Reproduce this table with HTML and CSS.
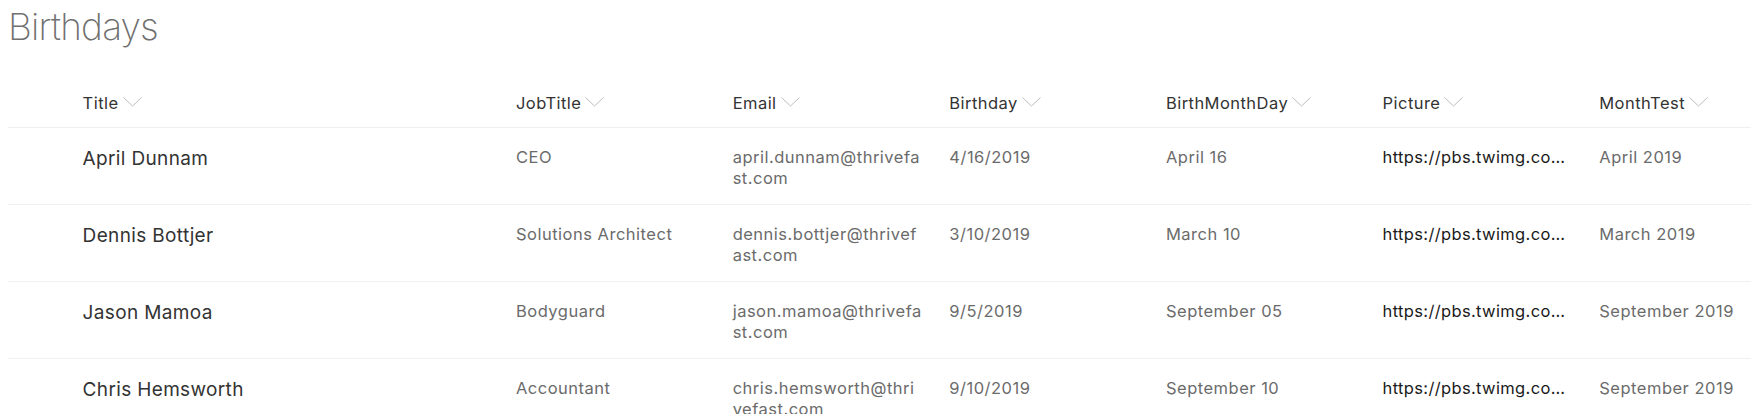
FILE: index.html
```html
<!DOCTYPE html>
<html lang="en">
<head>
<meta charset="utf-8">
<title>Birthdays</title>
<link rel="stylesheet" href="styles.css">
</head>
<body>
<main class="page">
  <h1 class="page-title">Birthdays</h1>
  <div class="list" role="table">
    <div class="row head" role="row">
      <div class="lead"></div>
      <div class="th">Title <svg class="chev" viewBox="0 0 19 10"><polyline points="0.5,0.5 9.5,9 18.5,0.5"/></svg></div>
      <div class="th">JobTitle <svg class="chev" viewBox="0 0 19 10"><polyline points="0.5,0.5 9.5,9 18.5,0.5"/></svg></div>
      <div class="th">Email <svg class="chev" viewBox="0 0 19 10"><polyline points="0.5,0.5 9.5,9 18.5,0.5"/></svg></div>
      <div class="th">Birthday <svg class="chev" viewBox="0 0 19 10"><polyline points="0.5,0.5 9.5,9 18.5,0.5"/></svg></div>
      <div class="th">BirthMonthDay <svg class="chev" viewBox="0 0 19 10"><polyline points="0.5,0.5 9.5,9 18.5,0.5"/></svg></div>
      <div class="th">Picture <svg class="chev" viewBox="0 0 19 10"><polyline points="0.5,0.5 9.5,9 18.5,0.5"/></svg></div>
      <div class="th">MonthTest <svg class="chev" viewBox="0 0 19 10"><polyline points="0.5,0.5 9.5,9 18.5,0.5"/></svg></div>
    </div>

    <div class="row" role="row">
      <div class="lead"></div>
      <div class="td name">April Dunnam</div>
      <div class="td">CEO</div>
      <div class="td email">april.dunnam@thrivefast.com</div>
      <div class="td">4/16/2019</div>
      <div class="td">April 16</div>
      <div class="td url"><span class="clip">https://pbs.twimg.co…</span></div>
      <div class="td">April 2019</div>
    </div>

    <div class="row" role="row">
      <div class="lead"></div>
      <div class="td name">Dennis Bottjer</div>
      <div class="td">Solutions Architect</div>
      <div class="td email">dennis.bottjer@thrivefast.com</div>
      <div class="td">3/10/2019</div>
      <div class="td">March 10</div>
      <div class="td url"><span class="clip">https://pbs.twimg.co…</span></div>
      <div class="td">March 2019</div>
    </div>

    <div class="row" role="row">
      <div class="lead"></div>
      <div class="td name">Jason Mamoa</div>
      <div class="td">Bodyguard</div>
      <div class="td email">jason.mamoa@thrivefast.com</div>
      <div class="td">9/5/2019</div>
      <div class="td">September 05</div>
      <div class="td url"><span class="clip">https://pbs.twimg.co…</span></div>
      <div class="td">September 2019</div>
    </div>

    <div class="row" role="row">
      <div class="lead"></div>
      <div class="td name">Chris Hemsworth</div>
      <div class="td">Accountant</div>
      <div class="td email">chris.hemsworth@thrivefast.com</div>
      <div class="td">9/10/2019</div>
      <div class="td">September 10</div>
      <div class="td url"><span class="clip">https://pbs.twimg.co…</span></div>
      <div class="td">September 2019</div>
    </div>
  </div>
</main>
</body>
</html>
```

FILE: styles.css
```css
html, body {
  margin: 0;
  padding: 0;
  background: #ffffff;
}

body {
  font-family: Inter, "Noto Sans", "Liberation Sans", sans-serif;
  color: #333333;
  overflow: hidden;
}

.page {
  padding-left: 8px;
}

.page-title {
  margin: 5px 0 0 0;
  font-size: 37px;
  line-height: 44px;
  font-weight: 200;
  color: #707070;
  letter-spacing: -0.8px;
}

.list {
  margin-top: 31px;
  width: 1800px;
}

.row {
  display: grid;
  grid-template-columns: 74.6px 433.4px repeat(5, 216.67px) 240px;
  border-bottom: 1px solid #f0f0f0;
  height: 77px;
  box-sizing: border-box;
}

.row.head {
  height: 48px;
  padding-top: 12.5px;
}

.th {
  display: flex;
  align-items: center;
  gap: 4px;
  height: 20px;
  font-size: 16.5px;
  line-height: 20px;
  letter-spacing: 0.45px;
  color: #333333;
  white-space: nowrap;
}

.chev {
  width: 19px;
  height: 10px;
  fill: none;
  stroke: #bdbdbd;
  stroke-width: 1;
  margin-top: -2px;
}

.td {
  padding-top: 19.25px;
  padding-right: 26.67px;
  font-size: 16.5px;
  line-height: 21px;
  letter-spacing: 0.5px;
  color: #6b6b6b;
  min-width: 0;
}

.td.name {
  padding-top: 19.5px;
  font-size: 19px;
  line-height: 22px;
  letter-spacing: 0.35px;
  color: #333333;
}

.td.email {
  word-break: break-all;
}

.td.url {
  color: #1a1a1a;
  letter-spacing: 0.35px;
}

.clip {
  display: block;
  white-space: nowrap;
  overflow: hidden;
  text-overflow: ellipsis;
}
```
